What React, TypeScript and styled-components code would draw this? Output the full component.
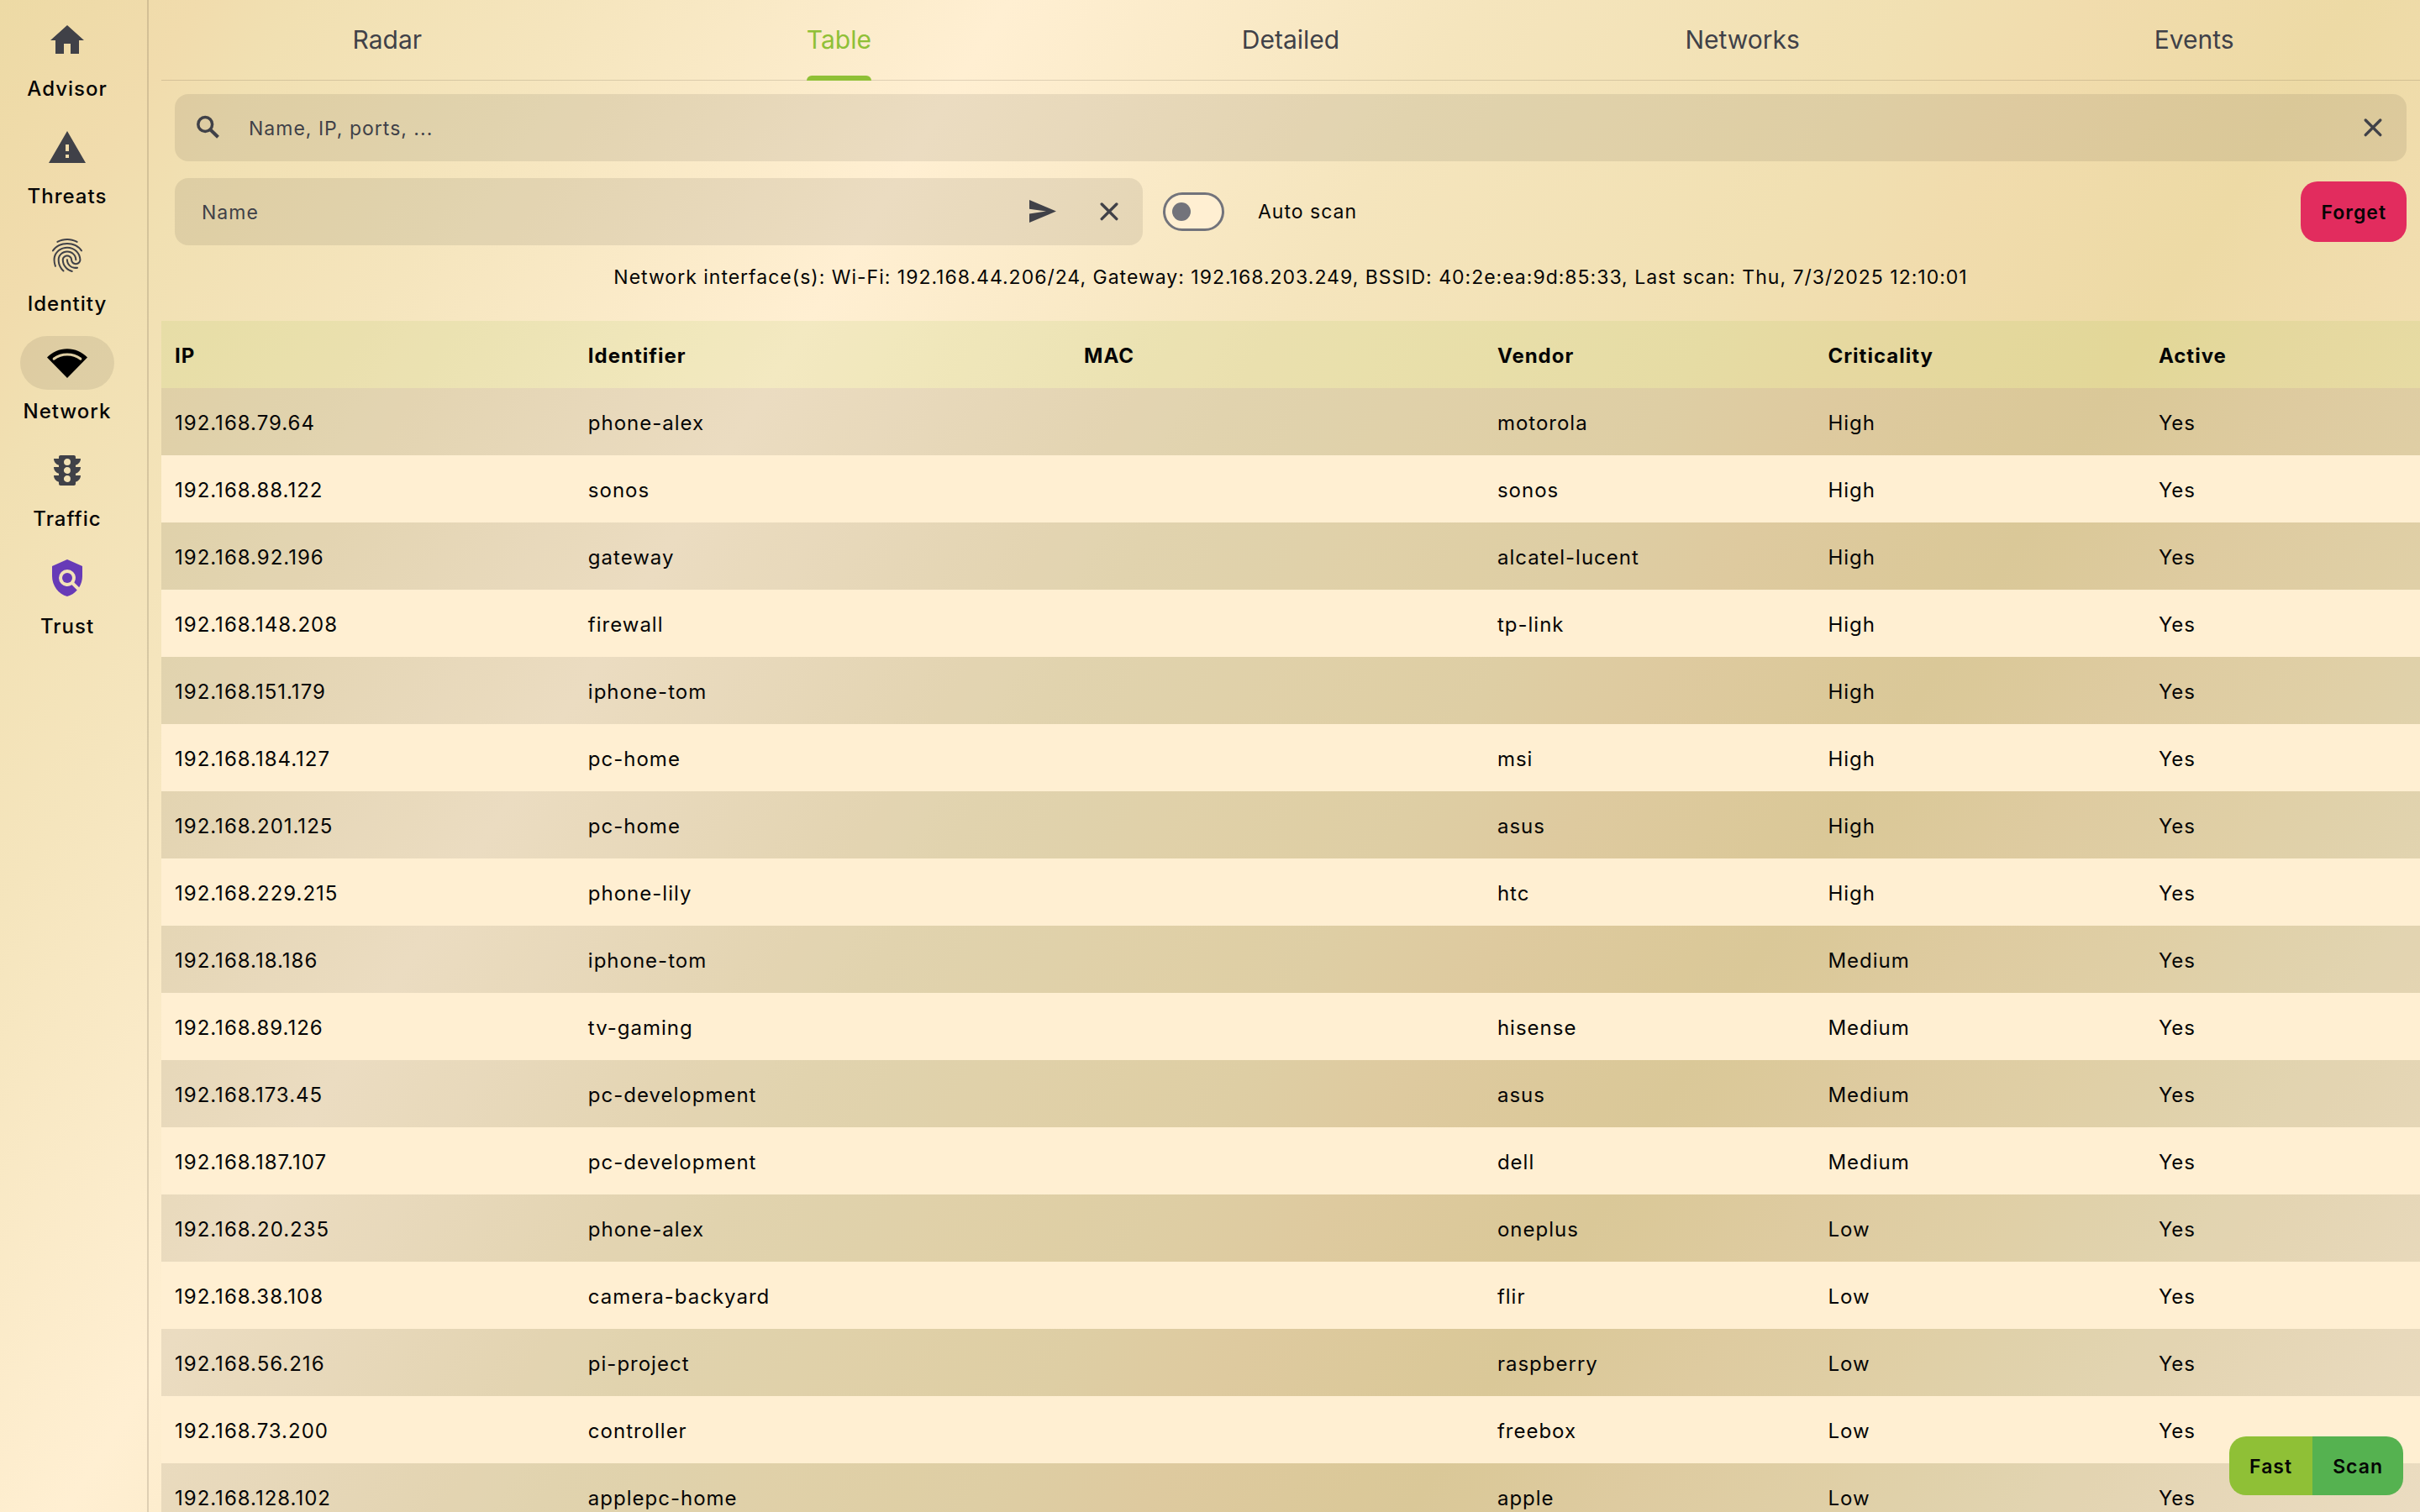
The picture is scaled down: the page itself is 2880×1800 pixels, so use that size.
import React, { useState } from 'react';
import styled, { createGlobalStyle, css } from 'styled-components';
import { MdHome, MdWarning, MdFingerprint, MdTraffic, MdPolicy } from 'react-icons/md';

const color = {
  text: '#050505',
  muted: '#404148',
  outline: '#72737b',
  cream: '#ffefd2',
  shade: 'rgba(0, 0, 0, 0.08)',
  line: 'rgba(60, 50, 40, 0.16)',
  accent: '#8fc036',
  accentWash: 'rgba(143, 192, 54, 0.11)',
  scan: '#55b250',
  danger: '#e22c5e',
  trust: '#673ab7',
};

const GlobalStyle = createGlobalStyle`
  *, *::before, *::after { box-sizing: border-box; }
  body {
    margin: 0;
    font-family: Inter, "Liberation Sans", sans-serif;
    font-size: 24px;
    line-height: 32px;
    letter-spacing: 1px;
    color: ${color.text};
  }
  button, input { font: inherit; letter-spacing: inherit; color: inherit; }
  button { border: 0; background: none; padding: 0; cursor: pointer; }
`;

const Shell = styled.div`
  display: flex;
  height: 100vh;
  overflow: hidden;
  background: linear-gradient(
    122deg,
    #eddaa5 0%,
    #f1dcad 6%,
    #f1e0b2 9%,
    #f5e5bd 17%,
    #ffefd2 30%,
    #f5e5bd 44%,
    #f1e0b2 57%,
    #f1dcad 62%,
    #eddaa5 70%,
    #f1ddae 76%,
    #f2e0b2 80%,
    #f5e5bd 87%,
    #ffefd2 100%
  );
`;

const Rail = styled.nav`
  display: flex;
  flex-direction: column;
  flex: none;
  width: 177px;
  padding: 16px 15px 0 0;
  border-right: 2px solid ${color.line};
`;

const RailItem = styled.button`
  display: flex;
  flex-direction: column;
  align-items: center;
  gap: 10px;
  height: 128px;
  font-weight: 500;
`;

const Pill = styled.span<{ $active?: boolean; $tint?: string }>`
  display: flex;
  align-items: center;
  justify-content: center;
  width: 112px;
  height: 64px;
  border-radius: 32px;
  color: ${(p) => p.$tint ?? color.muted};
  ${(p) =>
    p.$active &&
    css`
      color: #000;
      background: ${color.shade};
    `}
`;

const Main = styled.main`
  display: flex;
  flex-direction: column;
  flex: 1;
  min-width: 0;
  padding-left: 15px;
`;

const Tabs = styled.div`
  display: flex;
  flex: none;
  height: 96px;
  border-bottom: 1px solid ${color.line};
`;

const Tab = styled.button<{ $active: boolean }>`
  display: flex;
  flex: 1;
  justify-content: center;
  height: 96px;
  font-size: 30px;
  letter-spacing: 0;
  color: ${(p) => (p.$active ? color.accent : color.muted)};
`;

const TabLabel = styled.span<{ $active: boolean }>`
  display: flex;
  flex-direction: column;
  justify-content: space-between;
  height: 96px;
  line-height: 90px;
  padding-top: 2px;
  &::after {
    content: '';
    height: 6px;
    margin-top: -2px;
    border-radius: 6px 6px 0 0;
    background: ${(p) => (p.$active ? color.accent : 'transparent')};
  }
`;

const Controls = styled.div`
  display: flex;
  flex-direction: column;
  gap: 20px;
  padding: 16px 16px 0;
`;

const ControlRow = styled.div`
  display: flex;
  align-items: center;
`;

const Field = styled.div<{ $width?: string }>`
  display: flex;
  align-items: center;
  width: ${(p) => p.$width ?? '100%'};
  height: 80px;
  border-radius: 16px;
  background: ${color.shade};
  color: ${color.muted};
`;

const FieldIcon = styled.label`
  display: flex;
  align-items: center;
  justify-content: center;
  width: 80px;
  height: 80px;
`;

const FieldButton = styled.button`
  display: flex;
  align-items: center;
  justify-content: center;
  width: 80px;
  height: 80px;
`;

const TextInput = styled.input<{ $inset: number }>`
  flex: 1;
  min-width: 0;
  height: 80px;
  padding: 2px 0 0 ${(p) => p.$inset}px;
  border: 0;
  outline: 0;
  background: none;
  font-size: 23px;
  &::placeholder {
    color: ${color.muted};
    opacity: 1;
  }
`;

const SwitchLabel = styled.label`
  display: flex;
  align-items: center;
  gap: 40px;
  margin-left: 24px;
  font-size: 23px;
  cursor: pointer;
`;

const Switch = styled.input`
  appearance: none;
  display: flex;
  align-items: center;
  width: 73px;
  height: 46px;
  margin: 0;
  padding: 0 8px;
  border: 3px solid ${color.outline};
  border-radius: 23px;
  background: ${color.cream};
  &::before {
    content: '';
    width: 22px;
    height: 22px;
    border-radius: 50%;
    background: ${color.outline};
  }
  &:checked {
    justify-content: flex-end;
  }
`;

const ForgetButton = styled.button`
  height: 72px;
  margin-left: auto;
  padding: 2px 24px 0;
  border-radius: 20px;
  font-size: 23px;
  font-weight: 600;
  background: ${color.danger};
`;

const Status = styled.p`
  flex: none;
  margin: 22px 0 36px;
  font-size: 23px;
  text-align: center;
`;

const Scroller = styled.div`
  flex: 1;
  min-height: 0;
  overflow: hidden;
`;

const Table = styled.table`
  display: block;
  width: 100%;
  thead,
  tbody {
    display: block;
  }
`;

const Row = styled.tr<{ $head?: boolean }>`
  display: grid;
  grid-template-columns: 5fr 6fr 5fr 4fr 4fr 3fr;
  align-items: center;
  height: 80px;
  padding: 4px 16px 0;
  background: ${(p) => (p.$head ? color.accentWash : color.shade)};
  tbody &:nth-child(even) {
    background: ${color.cream};
  }
`;

const HeadCell = styled.th`
  padding: 0;
  text-align: left;
  font-weight: 700;
`;

const Cell = styled.td`
  padding: 0;
`;

const ScanActions = styled.div`
  position: fixed;
  right: 20px;
  bottom: 20px;
  display: flex;
  overflow: hidden;
  border-radius: 20px;
`;

const ScanButton = styled.button<{ $fill: string }>`
  height: 70px;
  padding: 2px 24px 0;
  font-size: 23px;
  font-weight: 600;
  background: ${(p) => p.$fill};
`;

const WifiIcon = () => (
  <svg width="48" height="48" viewBox="0 0 24 24" fill="currentColor" aria-hidden="true">
    <path
      fillRule="evenodd"
      d="M12 3.6C7.3 3.6 3.1 5.6 0 8.8L12 21 24 8.8C20.9 5.6 16.7 3.6 12 3.6zM3.7 8.900C6.100 7.100 8.900 6.200 12 6.200s5.900.9 8.300 2.700c.9.800.1 1.900-.8 1.300C17.300 8.600 14.800 7.700 12 7.700S6.700 8.600 4.500 10.200c-.9.600-1.700-.5-.8-1.300z"
    />
  </svg>
);

const SearchIcon = () => (
  <svg width="36" height="36" viewBox="0 0 36 36" fill="none" stroke="currentColor" aria-hidden="true">
    <circle cx="14.2" cy="14" r="8.4" strokeWidth="3.5" />
    <path d="M20 20L29.500 29.300" strokeWidth="4" strokeLinecap="butt" />
  </svg>
);

const CloseIcon = () => (
  <svg width="36" height="36" viewBox="0 0 36 36" fill="none" stroke="currentColor" aria-hidden="true">
    <path d="M9.200 9L26.800 26.600M26.800 9L9.200 26.600" strokeWidth="3.400" strokeLinecap="round" />
  </svg>
);

const SendIcon = () => (
  <svg width="36" height="36" viewBox="0 0 36 36" fill="currentColor" aria-hidden="true">
    <path d="M3 4L35 17.600 3 31V20.500L23 17.600 3 14.700z" />
  </svg>
);

const sections = [
  { name: 'Advisor', icon: <MdHome size={48} /> },
  { name: 'Threats', icon: <MdWarning size={48} /> },
  { name: 'Identity', icon: <MdFingerprint size={48} /> },
  { name: 'Network', icon: <WifiIcon /> },
  { name: 'Traffic', icon: <MdTraffic size={48} /> },
  { name: 'Trust', icon: <MdPolicy size={48} />, tint: color.trust },
];

const tabs = ['Radar', 'Table', 'Detailed', 'Networks', 'Events'];

const columns = ['IP', 'Identifier', 'MAC', 'Vendor', 'Criticality', 'Active'];

const devices = [
  ['192.168.79.64', 'phone-alex', '', 'motorola', 'High', 'Yes'],
  ['192.168.88.122', 'sonos', '', 'sonos', 'High', 'Yes'],
  ['192.168.92.196', 'gateway', '', 'alcatel-lucent', 'High', 'Yes'],
  ['192.168.148.208', 'firewall', '', 'tp-link', 'High', 'Yes'],
  ['192.168.151.179', 'iphone-tom', '', '', 'High', 'Yes'],
  ['192.168.184.127', 'pc-home', '', 'msi', 'High', 'Yes'],
  ['192.168.201.125', 'pc-home', '', 'asus', 'High', 'Yes'],
  ['192.168.229.215', 'phone-lily', '', 'htc', 'High', 'Yes'],
  ['192.168.18.186', 'iphone-tom', '', '', 'Medium', 'Yes'],
  ['192.168.89.126', 'tv-gaming', '', 'hisense', 'Medium', 'Yes'],
  ['192.168.173.45', 'pc-development', '', 'asus', 'Medium', 'Yes'],
  ['192.168.187.107', 'pc-development', '', 'dell', 'Medium', 'Yes'],
  ['192.168.20.235', 'phone-alex', '', 'oneplus', 'Low', 'Yes'],
  ['192.168.38.108', 'camera-backyard', '', 'flir', 'Low', 'Yes'],
  ['192.168.56.216', 'pi-project', '', 'raspberry', 'Low', 'Yes'],
  ['192.168.73.200', 'controller', '', 'freebox', 'Low', 'Yes'],
  ['192.168.128.102', 'applepc-home', '', 'apple', 'Low', 'Yes'],
];

export default function App() {
  const [section, setSection] = useState('Network');
  const [tab, setTab] = useState('Table');
  const [query, setQuery] = useState('');
  const [name, setName] = useState('');

  return (
    <>
      <GlobalStyle />
      <Shell>
        <Rail aria-label="Sections">
          {sections.map((s) => (
            <RailItem key={s.name} type="button" onClick={() => setSection(s.name)}>
              <Pill $active={s.name === section} $tint={s.tint}>
                {s.icon}
              </Pill>
              {s.name}
            </RailItem>
          ))}
        </Rail>
        <Main>
          <Tabs role="tablist">
            {tabs.map((t) => (
              <Tab
                key={t}
                type="button"
                role="tab"
                aria-selected={t === tab}
                $active={t === tab}
                onClick={() => setTab(t)}
              >
                <TabLabel $active={t === tab}>{t}</TabLabel>
              </Tab>
            ))}
          </Tabs>
          <Controls>
            <Field>
              <FieldIcon htmlFor="search" aria-label="Search">
                <SearchIcon />
              </FieldIcon>
              <TextInput
                id="search"
                $inset={8}
                placeholder="Name, IP, ports, ..."
                value={query}
                onChange={(e) => setQuery(e.target.value)}
              />
              <FieldButton type="button" aria-label="Clear search" onClick={() => setQuery('')}>
                <CloseIcon />
              </FieldButton>
            </Field>
            <ControlRow>
              <Field $width="1152px">
                <TextInput
                  aria-label="Name"
                  $inset={32}
                  placeholder="Name"
                  value={name}
                  onChange={(e) => setName(e.target.value)}
                />
                <FieldButton type="button" aria-label="Send">
                  <SendIcon />
                </FieldButton>
                <FieldButton type="button" aria-label="Clear name" onClick={() => setName('')}>
                  <CloseIcon />
                </FieldButton>
              </Field>
              <SwitchLabel>
                <Switch type="checkbox" role="switch" />
                Auto scan
              </SwitchLabel>
              <ForgetButton type="button">Forget</ForgetButton>
            </ControlRow>
          </Controls>
          <Status>
            Network interface(s): Wi-Fi: 192.168.44.206/24, Gateway: 192.168.203.249, BSSID:
            40:2e:ea:9d:85:33, Last scan: Thu, 7/3/2025 12:10:01
          </Status>
          <Scroller>
            <Table>
              <thead>
                <Row $head>
                  {columns.map((c) => (
                    <HeadCell key={c} scope="col">
                      {c}
                    </HeadCell>
                  ))}
                </Row>
              </thead>
              <tbody>
                {devices.map((d) => (
                  <Row key={d[0]}>
                    {d.map((value, i) => (
                      <Cell key={columns[i]}>{value}</Cell>
                    ))}
                  </Row>
                ))}
              </tbody>
            </Table>
          </Scroller>
        </Main>
      </Shell>
      <ScanActions>
        <ScanButton type="button" $fill={color.accent}>
          Fast
        </ScanButton>
        <ScanButton type="button" $fill={color.scan}>
          Scan
        </ScanButton>
      </ScanActions>
    </>
  );
}
